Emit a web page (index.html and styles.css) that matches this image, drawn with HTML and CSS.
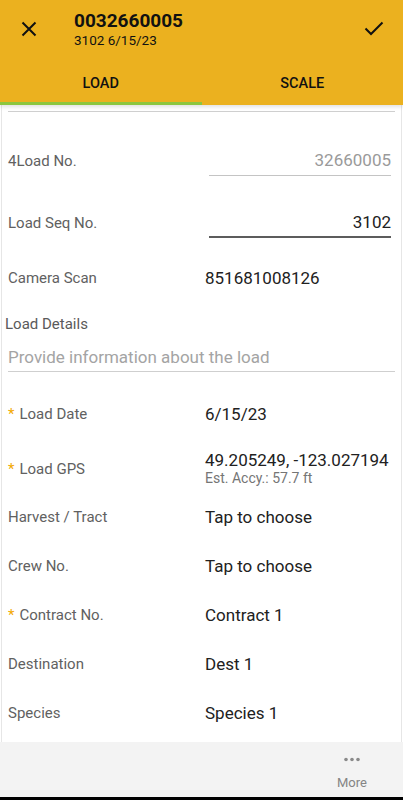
FILE: index.html
```html
<!DOCTYPE html>
<html lang="en">
<head>
    <meta charset="UTF-8">
    <meta name="viewport" content="width=device-width, initial-scale=1.0">
    <title>Load 0032660005</title>
    <link rel="stylesheet" href="styles.css">
</head>
<body>

    <header class="appbar">
        <div class="titlebar">
            <button class="icon-btn close" type="button" aria-label="Close">
                <svg width="16" height="16" viewBox="0 0 16 16"><path d="M1.5 1.5 L14.5 14.5 M14.5 1.5 L1.5 14.5" stroke="#111" stroke-width="2" fill="none"/></svg>
            </button>
            <div class="titles">
                <div class="title">0032660005</div>
                <div class="subtitle">3102 6/15/23</div>
            </div>
            <button class="icon-btn save" type="button" aria-label="Save">
                <svg width="20" height="16" viewBox="0 0 20 16"><path d="M1.5 8.5 L7 14 L18.5 2.5" stroke="#111" stroke-width="2" fill="none"/></svg>
            </button>
        </div>
        <nav class="tabs">
            <div class="tab active">LOAD</div>
            <div class="tab">SCALE</div>
        </nav>
    </header>

    <main class="form">
        <div class="divider"></div>

        <div class="row field first">
            <label class="label">4Load No.</label>
            <div class="input readonly">32660005</div>
        </div>

        <div class="row field second">
            <label class="label">Load Seq No.</label>
            <div class="input focused">3102</div>
        </div>

        <div class="row camera">
            <label class="label">Camera Scan</label>
            <div class="value">851681008126</div>
        </div>

        <div class="details">
            <div class="details-label">Load Details</div>
            <div class="textarea">Provide information about the load</div>
        </div>

        <div class="row date">
            <label class="label"><span class="req">*</span>Load Date</label>
            <div class="value">6/15/23</div>
        </div>

        <div class="row gps">
            <label class="label"><span class="req">*</span>Load GPS</label>
            <div class="value">
                <div class="coords">49.205249, -123.027194</div>
                <div class="accuracy">Est. Accy.: 57.7 ft</div>
            </div>
        </div>

        <div class="row pick">
            <label class="label">Harvest / Tract</label>
            <div class="value">Tap to choose</div>
        </div>

        <div class="row pick">
            <label class="label">Crew No.</label>
            <div class="value">Tap to choose</div>
        </div>

        <div class="row pick">
            <label class="label"><span class="req">*</span>Contract No.</label>
            <div class="value">Contract 1</div>
        </div>

        <div class="row pick">
            <label class="label">Destination</label>
            <div class="value">Dest 1</div>
        </div>

        <div class="row pick">
            <label class="label">Species</label>
            <div class="value">Species 1</div>
        </div>
    </main>

    <footer class="bottombar">
        <div class="more">
            <svg width="18" height="5" viewBox="0 0 18 5"><circle cx="3" cy="2.5" r="1.8" fill="#8a8a8a"/><circle cx="9" cy="2.5" r="1.8" fill="#8a8a8a"/><circle cx="15" cy="2.5" r="1.8" fill="#8a8a8a"/></svg>
            <span>More</span>
        </div>
    </footer>
    <div class="navstrip"></div>

</body>
</html>
```

FILE: styles.css
```css
html, body {
    margin: 0;
    padding: 0;
}
body {
    width: 403px;
    height: 800px;
    display: flex;
    flex-direction: column;
    font-family: Roboto, "Liberation Sans", sans-serif;
    background-color: white;
    color: #212121;
    overflow: hidden;
}

/* header */
.appbar {
    background-color: #ebb11f;
    box-shadow: 0 2px 4px rgba(0, 0, 0, 0.12);
    position: relative;
    z-index: 1;
}
.titlebar {
    height: 56px;
    display: flex;
    align-items: center;
}
.icon-btn {
    background: none;
    border: none;
    padding: 0;
    display: flex;
    align-items: center;
    justify-content: center;
}
.close {
    width: 58px;
    height: 56px;
    margin-top: 1px;
}
.save {
    width: 58px;
    height: 56px;
    margin-left: auto;
}
.titles {
    margin-left: 16px;
    margin-top: 2px;
}
.title {
    font-size: 19px;
    font-weight: bold;
    line-height: 22px;
    color: #111;
}
.subtitle {
    font-size: 13.5px;
    line-height: 17px;
    color: #111;
}
.tabs {
    display: flex;
    height: 49px;
}
.tab {
    flex: 1;
    display: flex;
    align-items: center;
    justify-content: center;
    font-size: 14.5px;
    font-weight: 500;
    color: #111;
    border-bottom: 3px solid transparent;
    padding-top: 8px;
}
.tab.active {
    border-bottom-color: #8cc63e;
}

/* form */
.form {
    flex: 1;
    overflow: hidden;
    margin: 0 1px;
    border-left: 1px solid #e6e6e6;
    border-right: 1px solid #e6e6e6;
}
.divider {
    height: 1px;
    background-color: #cfcfcf;
    margin: 6px 6px 0 6px;
}
.row {
    display: flex;
    align-items: center;
    padding-left: 6px;
    padding-right: 10px;
}
.label {
    width: 197px;
    flex-shrink: 0;
    font-size: 15px;
    color: #616161;
}
.req {
    color: #f2a900;
    margin-right: 5px;
}
.value {
    min-width: 0;
    font-size: 17px;
    color: #212121;
}
.input {
    flex: 1;
    margin-left: 4px;
    height: 29px;
    line-height: 29px;
    text-align: right;
    font-size: 17px;
    border-bottom: 1px solid #c4c4c4;
}
.input.readonly {
    color: #9a9a9a;
}
.input.focused {
    border-bottom: 2px solid #5c5c5c;
    height: 28px;
}
.field.first {
    margin-top: 34px;
}
.field.second {
    margin-top: 32px;
}
.camera {
    height: 30px;
    margin-top: 25px;
}
.details {
    margin: 21px 6px 0 3px;
}
.details-label {
    font-size: 15px;
    line-height: 20px;
    color: #5a5a5a;
}
.textarea {
    margin-top: 9px;
    margin-left: 3px;
    height: 28px;
    line-height: 28px;
    font-size: 17px;
    color: #a4a4a4;
    border-bottom: 1px solid #cfcfcf;
}
.date {
    height: 30px;
    margin-top: 27px;
}
.gps {
    height: 47px;
    margin-top: 16px;
}
.coords {
    line-height: 20px;
}
.accuracy {
    font-size: 14px;
    line-height: 17px;
    color: #757575;
}
.pick {
    height: 49px;
}

/* bottom */
.bottombar {
    height: 55px;
    background-color: #f3f3f3;
    display: flex;
    justify-content: flex-end;
}
.more {
    width: 60px;
    margin-right: 21px;
    display: flex;
    flex-direction: column;
    align-items: center;
    padding-top: 15px;
    font-size: 13px;
    color: #858585;
}
.more span {
    margin-top: 13px;
}
.navstrip {
    height: 3px;
    background-color: black;
}
```
